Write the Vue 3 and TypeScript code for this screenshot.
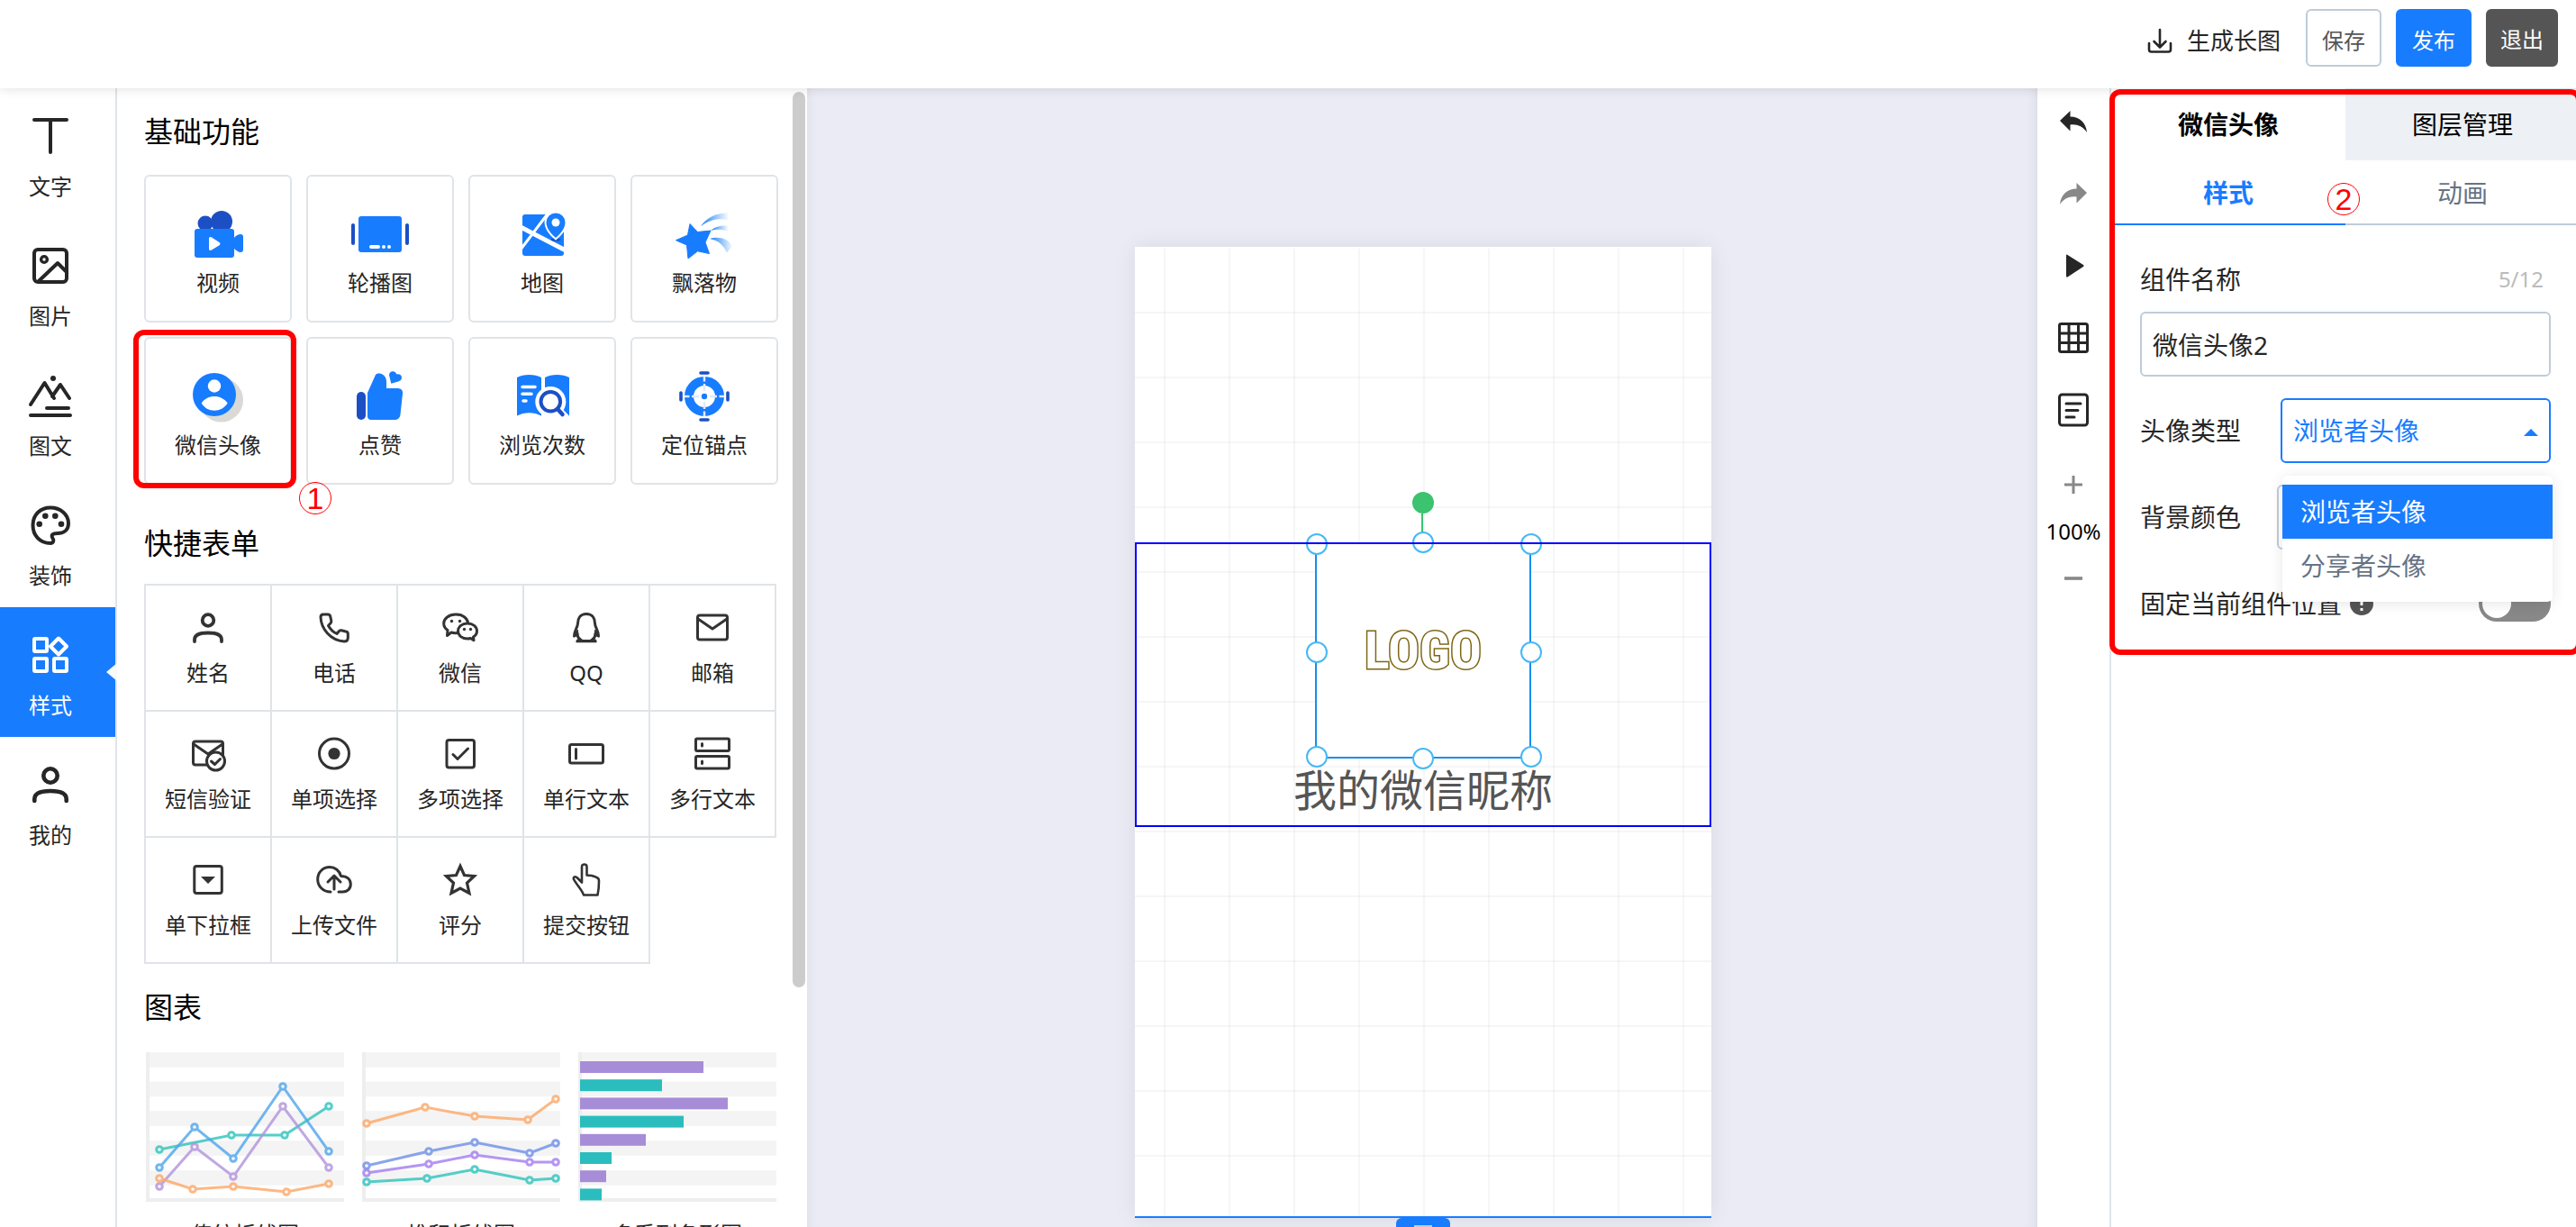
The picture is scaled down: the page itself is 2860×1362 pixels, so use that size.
<script setup lang="ts">
import { ref } from 'vue'

interface Item {
  label: string
  icon: string
}

interface Series {
  color: string
  points: [number, number][]
}

interface Bar {
  color: string
  width: number
}

interface Chart {
  label: string
  series: Series[]
  bars: Bar[]
}

const BLUE = '#187cff'
const NAVY = '#1d4fc4'

const railItems: Item[] = [
  { label: '文字', icon: '<path d="M6 6H42M24 6V42"/>' },
  {
    label: '图片',
    icon: '<rect x="6" y="6" width="36" height="36" rx="4"/><circle cx="17" cy="17" r="3.4" stroke-width="3.4"/><path d="M11 41L32 21L42 31"/>',
  },
  {
    label: '图文',
    icon: '<path d="M2 34L17.500 10L28 27M26 25L35 12L45 27M20 38H44M2 46H46"/><circle cx="27" cy="5" r="3" fill="currentColor" stroke="none"/>',
  },
  {
    label: '装饰',
    icon: '<path d="M24 44C12 44 4.500 35 4.500 24C4.500 12 13 4.500 24 4.500C35 4.500 44 12 44 22C44 30 38 33 32 33C26 33 24.500 35 26.500 38.500C28.500 41 27 44 24 44Z"/><g fill="currentColor" stroke="none"><circle cx="11.700" cy="22.700" r="3.300"/><circle cx="18.300" cy="13.700" r="3.300"/><circle cx="29.300" cy="13.700" r="3.300"/><circle cx="36" cy="22.700" r="3.300"/></g>',
  },
  {
    label: '样式',
    icon: '<rect x="6" y="6" width="14" height="14" rx="1"/><rect x="6" y="28" width="14" height="14" rx="1"/><rect x="28" y="28" width="14" height="14" rx="1"/><path d="M33 5.500L42 14.500L33 23.500L24 14.500Z"/>',
  },
  {
    label: '我的',
    icon: '<circle cx="24" cy="14" r="7.700" stroke-width="4.600"/><path d="M6.300 42V40C6.300 33 14 31 24 31S41.700 33 41.700 40V42" stroke-width="4.600"/>',
  },
]

const basicItems: Item[] = [
  {
    label: '视频',
    icon: `<g fill="${NAVY}"><circle cx="16" cy="18" r="8.500"/><circle cx="34" cy="16" r="12"/></g><rect x="4" y="24" width="44" height="32" rx="3" fill="${BLUE}"/><path d="M48 34C50 31 53 30 55 30C57 30 58 31 58 33V47C58 49 57 50 55 50C53 50 50 48 48 46Z" fill="${BLUE}"/><path d="M20 35C20 33 21.500 32.500 23 33.400L31.500 39C32.800 40 32.800 41.500 31.500 42.300L23 47.600C21.500 48.500 20 48 20 46Z" fill="#fff"/>`,
  },
  {
    label: '轮播图',
    icon: `<g fill="${NAVY}"><rect x="-2" y="18" width="4" height="24" rx="2"/><rect x="58" y="18" width="4" height="24" rx="2"/></g><rect x="6" y="10" width="48" height="40" rx="3" fill="${BLUE}"/><g fill="#fff"><rect x="18" y="42" width="12" height="4" rx="2"/><circle cx="34" cy="44" r="2"/><circle cx="40" cy="44" r="2"/></g>`,
  },
  {
    label: '地图',
    icon: `<rect x="8" y="8" width="46" height="46" rx="3" fill="${BLUE}"/><path d="M6 22L56 48" stroke="#fff" stroke-width="5"/><path d="M37 6L6 47" stroke="#fff" stroke-width="3"/><ellipse cx="45" cy="36" rx="5.500" ry="1.800" fill="${NAVY}"/><path d="M45 34C38 28 34.500 22 34.500 17A10.500 10.500 0 0 1 55.500 17C55.500 22 52 28 45 34Z" fill="${BLUE}" stroke="#fff" stroke-width="4" paint-order="stroke"/><circle cx="45" cy="17" r="4.500" fill="#fff"/>`,
  },
  {
    label: '飘落物',
    icon: `<defs><linearGradient id="tail"><stop offset="0" stop-color="${BLUE}"/><stop offset="1" stop-color="#2a8de8" stop-opacity="0.050"/></linearGradient></defs><path d="M-1.500 36.700L11.500 31L14 18.500L22.500 27.500L37 26L31 39L35.500 51.500L22.500 48.800L12 57L10.500 42Z" fill="${BLUE}" stroke="${BLUE}" stroke-linejoin="round"/><g fill="url(#tail)"><path d="M26 21C33 11 44 6 56 6.500V14C45 12 36 14 26 21Z"/><path d="M37 26C42 21.500 48 20 56 20.500V26.500C49 24.500 44 24 37 26Z"/><path d="M36 35C46 32 57 35 61 43.500L55 50.500C51 42 46 37 36 35Z"/></g>`,
  },
  {
    label: '微信头像',
    icon: `<circle cx="33.500" cy="34" r="24.500" fill="#d9dad6"/><circle cx="26" cy="28" r="24" fill="${BLUE}"/><circle cx="26" cy="18.500" r="7.200" fill="#fff"/><path d="M11.700 37.500C15 32.500 20 30 26 30S37 32.500 40.700 37.500C37 43 32 45.700 26 45.700S15 43 11.700 37.500Z" fill="#fff"/>`,
  },
  {
    label: '点赞',
    icon: `<rect x="4" y="25" width="10" height="31" rx="5" fill="${NAVY}"/><path d="M16 26L25 6C26.500 3 36.500 4 37 13V21H49C53 21 55.500 23 55 27L52.500 50C52 54 49.500 56 46 56H20C17.500 56 16 54.500 16 52Z" fill="${BLUE}"/><path d="M42.300 15.700L40.200 7C39.500 3.500 43 1.500 45.500 2.500C47 3 48 4.200 48.300 5.500C51 4.500 54 6.500 54 9C54 11.500 52.500 12.800 50 13.500Z" fill="${BLUE}"/>`,
  },
  {
    label: '浏览次数',
    icon: `<path d="M2 9C9 5 22 5 29 9V51.500C21 47 10 47 2 51.500ZM33 9C40 5 53 5 60 9V51.500C52 47 41 47 33 51.500Z" fill="${BLUE}"/><path d="M8 19.500H22M8 27.300H18M9 35H12" stroke="#fff" stroke-width="3.500" stroke-linecap="round"/><circle cx="39.300" cy="36" r="17" fill="#fff"/><path d="M46 44L56 54" stroke="#fff" stroke-width="9"/><circle cx="39.300" cy="35.700" r="10.800" fill="none" stroke="${NAVY}" stroke-width="4"/><path d="M47.500 44.500L52.500 50" stroke="${NAVY}" stroke-width="4.500" stroke-linecap="round"/>`,
  },
  {
    label: '定位锚点',
    icon: `<circle cx="30" cy="30" r="17" fill="none" stroke="${BLUE}" stroke-width="10"/><path d="M30 8V13.500M30 16V24M30 36V44M30 46.500V52M8 30H13.500M16 30H24M36 30H44M46.500 30H52" stroke="#dfeafa" stroke-width="2.500"/><circle cx="30" cy="30" r="3.200" fill="${BLUE}"/><path d="M26 4H34M26 56H34M4 26V34M56 26V34" stroke="${NAVY}" stroke-width="3.600" stroke-linecap="round"/>`,
  },
]

const formItems: Item[] = [
  {
    label: '姓名',
    icon: '<circle cx="20" cy="11.500" r="6.300" stroke-width="3.800"/><path d="M5 35V33C5 27.500 12 25.500 20 25.500S35 27.500 35 33V35" stroke-width="3.800"/>',
  },
  {
    label: '电话',
    icon: '<path d="M5 8C5 6 6 5 8 5H13C14.500 5 15.500 6 15.800 7.500L16.800 12C17 13 16.700 14 16 14.800L13.500 17.500C16 22 18.500 24.500 23 26.500L25.500 23.500C26 23 27 22.600 28 22.800L33 24C34.500 24.300 35.300 25.300 35.300 26.500V31C35.300 34 33.500 35 31 35C16 34 5.500 21 5 8Z"/>',
  },
  {
    label: '微信',
    icon: '<path d="M17 25.500C14 26 12 25.700 10 25L5.500 28.500L6 22.500C3 20.500 1.700 18 1.700 15C1.700 9.500 7.500 5 15 5C22 5 27.500 8.500 28.500 14"/><path d="M28 15C22 15 17.500 18.500 17.500 23.500S22 32 28 32C29.500 32 30.500 31.800 31.500 31.500L35 33.700L34.500 30C37 28.500 38.500 26 38.500 23.500C38.500 18.500 34 15 28 15Z"/><g fill="currentColor" stroke="none"><circle cx="10.500" cy="12.500" r="1.700"/><circle cx="19.500" cy="12.500" r="1.700"/><circle cx="24.500" cy="21.500" r="1.700"/><circle cx="31.500" cy="21.500" r="1.700"/></g>',
  },
  {
    label: 'QQ',
    icon: '<path d="M20 4.500C13.500 4.500 10.500 9 10.500 15C10.500 19 6.500 23 6.500 29L10 26C10 29 11 31 12.500 32.500L10 34.500H30L27.500 32.500C29 31 30 29 30 26L33.500 29C33.500 23 29.500 19 29.500 15C29.500 9 26.500 4.500 20 4.500Z"/><path d="M6 29.500L10.500 22V28ZM34 29.500L29.500 22V28ZM9 35.500L13 31L17 34.500H23L27 31L31 35.500Z" fill="currentColor" stroke-width="1"/>',
  },
  {
    label: '邮箱',
    icon: '<rect x="3.500" y="6" width="33" height="27" rx="2.500"/><path d="M4 10L20 21L36 10"/>',
  },
  {
    label: '短信验证',
    icon: '<rect x="3.500" y="6" width="33" height="26" rx="2.500"/><path d="M4 9L20 20L36 9"/><circle cx="28.500" cy="28" r="10" fill="#fff"/><path d="M23.500 28L27.500 31.500L33.500 25.500"/>',
  },
  { label: '单项选择', icon: '<circle cx="20" cy="19.500" r="16.500"/><circle cx="20" cy="19.500" r="6.600" fill="currentColor" stroke="none"/>' },
  { label: '多项选择', icon: '<rect x="5" y="4.500" width="30.500" height="30.500" rx="2.500"/><path d="M12 20.500L17 25.500L28.500 14"/>' },
  { label: '单行文本', icon: '<rect x="1.500" y="9.500" width="37" height="20.500" rx="2"/><path d="M8.500 14.500V25"/>' },
  {
    label: '多行文本',
    icon: '<rect x="1.500" y="3" width="37" height="13.500" rx="1.500"/><rect x="1.500" y="22.500" width="37" height="13.500" rx="1.500"/><path d="M8.500 8.500V11M8.500 28V30.500"/>',
  },
  { label: '单下拉框', icon: '<rect x="4.800" y="4.500" width="30.500" height="30" rx="2.500"/><path d="M12 16H28L20 24Z" fill="currentColor" stroke="none"/>' },
  {
    label: '上传文件',
    icon: '<path d="M16 33C8 33 1.700 27 1.700 19C1.700 11 8 5.500 15 5.500C21 5.500 26 9.500 27.500 15.500C34 15.500 38.300 19 38.300 24.500C38.300 30 34 33 29.500 33H25M20 30V15.500M13 22L20 15L27 22"/>',
  },
  { label: '评分', icon: '<path d="M20 4.500L24.500 14.500L35.500 15.500L27.500 23L30 34.500L20 29L10 34.500L12.500 23L4.500 15.500L15.500 14.500Z" stroke-width="3.200" stroke-linejoin="miter"/>' },
  {
    label: '提交按钮',
    icon: '<path d="M15 22.500V5C15 1.600 20.500 1.600 20.500 5V14.500L26 15C33 17 34 18 34 21C34 28 33.500 32 32.500 36.500H17C15.500 31 9 25 6 19C5 16 8 15.500 10 17.500Z" stroke-width="2.600"/>',
  },
]

const charts: Chart[] = [
  {
    label: '传统折线图',
    series: [
      { color: '#2bc4bb', points: [[15, 108], [95, 92], [154, 92], [203, 60]] },
      { color: '#b193dc', points: [[15, 149], [54, 105], [97, 138], [152, 60], [203, 128]] },
      { color: '#4fa5ec', points: [[15, 128], [54, 83], [97, 118], [152, 38], [203, 110]] },
      { color: '#fda766', points: [[15, 140], [52, 152], [97, 149], [156, 155], [203, 146]] },
    ],
    bars: [],
  },
  {
    label: '堆积折线图',
    series: [
      { color: '#fda766', points: [[5, 79], [70, 61], [125, 71], [184, 75], [215, 52]] },
      { color: '#6d8fe8', points: [[5, 126], [74, 110], [125, 100], [186, 112], [215, 101]] },
      { color: '#a27df0', points: [[5, 134], [74, 124], [125, 114], [186, 122], [215, 122]] },
      { color: '#2bc4bb', points: [[5, 144], [72, 140], [125, 130], [186, 142], [215, 140]] },
    ],
    bars: [],
  },
  {
    label: '多系列条形图',
    series: [],
    bars: [
      { color: '#a78dd8', width: 137 },
      { color: '#2bbdbd', width: 91 },
      { color: '#a78dd8', width: 164 },
      { color: '#2bbdbd', width: 115 },
      { color: '#a78dd8', width: 73 },
      { color: '#2bbdbd', width: 35 },
      { color: '#a78dd8', width: 29 },
      { color: '#2bbdbd', width: 24 },
    ],
  },
]

const avatarTypes = ['浏览者头像', '分享者头像']
const handles = ['nw', 'n', 'ne', 'w', 'e', 'sw', 's', 'se']

const activeRail = ref('样式')
const componentName = ref('微信头像2')
const avatarType = ref('浏览者头像')
const pinned = ref(false)

const toPolyline = (points: [number, number][]): string => points.map((p) => p.join(',')).join(' ')
</script>

<template>
  <div class="editor">
    <header class="topbar">
      <button class="export" type="button">
        <svg width="28" height="28" viewBox="0 0 28 28" fill="none" stroke="currentColor" stroke-width="2.6" stroke-linecap="round" stroke-linejoin="round">
          <path d="M14 2V21M7.500 15L14 21.500L20.500 15M2 17V24Q2 26.500 4.500 26.500H23.500Q26 26.500 26 24V17" />
        </svg>
        生成长图
      </button>
      <button class="btn" type="button">保存</button>
      <button class="btn primary" type="button">发布</button>
      <button class="btn dark" type="button">退出</button>
    </header>

    <div class="workspace">
      <nav class="rail">
        <button
          v-for="item in railItems"
          :key="item.label"
          type="button"
          class="rail-item"
          :class="{ active: item.label === activeRail }"
          @click="activeRail = item.label"
        >
          <svg width="48" height="48" viewBox="0 0 48 48" fill="none" stroke="currentColor" stroke-width="4" stroke-linecap="round" stroke-linejoin="round" v-html="item.icon"></svg>
          <span>{{ item.label }}</span>
        </button>
      </nav>

      <aside class="library">
        <h2>基础功能</h2>
        <div class="cards">
          <button v-for="item in basicItems" :key="item.label" type="button" class="card">
            <svg width="60" height="60" viewBox="0 0 60 60" fill="none" v-html="item.icon"></svg>
            <span>{{ item.label }}</span>
            <i v-if="item.label === '微信头像'" class="mark card-mark"></i>
            <b v-if="item.label === '微信头像'" class="step card-step">1</b>
          </button>
        </div>

        <h2 class="form-title">快捷表单</h2>
        <div class="fields">
          <button v-for="item in formItems" :key="item.label" type="button" class="field">
            <svg width="40" height="40" viewBox="0 0 40 40" fill="none" stroke="currentColor" stroke-width="3" stroke-linecap="round" stroke-linejoin="round" v-html="item.icon"></svg>
            <span>{{ item.label }}</span>
          </button>
        </div>

        <h2 class="chart-title">图表</h2>
        <div class="charts">
          <figure v-for="chart in charts" :key="chart.label">
            <svg width="220" height="166" viewBox="0 0 220 166" fill="none">
              <path d="M4 8.500H220M4 41H220M4 73.500H220M4 106.500H220M4 139.500H220" stroke="#f4f4f4" stroke-width="16.500" />
              <path d="M2 0V164H220" stroke="#eee" stroke-width="4" />
              <rect v-for="(bar, i) in chart.bars" :key="i" x="2" :y="10 + i * 20.2" :width="bar.width" height="13" :fill="bar.color" />
              <g v-for="line in chart.series" :key="line.color" :stroke="line.color" stroke-width="3" opacity="0.8">
                <polyline :points="toPolyline(line.points)" />
                <circle v-for="(p, i) in line.points" :key="i" :cx="p[0]" :cy="p[1]" r="3.3" fill="#fff" />
              </g>
            </svg>
            <figcaption>{{ chart.label }}</figcaption>
          </figure>
        </div>
        <i class="scroll-thumb"></i>
      </aside>

      <main class="stage">
        <section class="page">
          <div class="frame">
            <div class="avatar">
              <span class="logo">LOGO</span>
              <i class="rotate"></i>
              <i v-for="h in handles" :key="h" class="handle" :class="h"></i>
            </div>
            <p class="nickname">我的微信昵称</p>
          </div>
          <button class="page-grip" type="button" aria-label="调整页面高度"><i></i></button>
        </section>
      </main>

      <div class="tools">
        <button type="button" aria-label="撤销">
          <svg width="34" height="34" viewBox="0 0 34 34" fill="currentColor"><path d="M2 16L13.500 5V11.500C24 11.500 31 18 32 29C27 22 21 19.500 13.500 20.500V27.500Z" /></svg>
        </button>
        <button type="button" class="muted" aria-label="重做">
          <svg width="34" height="34" viewBox="0 0 34 34" fill="currentColor"><path d="M32 16L20.500 5V11.500C10 11.500 3 18 2 29C7 22 13 19.500 20.500 20.500V27.500Z" /></svg>
        </button>
        <button type="button" aria-label="预览">
          <svg width="34" height="34" viewBox="0 0 34 34" fill="currentColor"><path d="M9 5.500Q9 4 10.500 5L28 16Q29.500 17 28 18L10.500 29.500Q9 30 9 28.500Z" /></svg>
        </button>
        <button type="button" aria-label="网格">
          <svg width="34" height="34" viewBox="0 0 34 34" fill="none" stroke="currentColor" stroke-width="3"><rect x="1.500" y="1.500" width="31" height="31" rx="2" /><path d="M12 2V32M22.500 2V32M2 12H32M2 22.500H32" /></svg>
        </button>
        <button type="button" aria-label="页面说明">
          <svg width="34" height="38" viewBox="0 0 34 38" fill="none" stroke="currentColor" stroke-width="3" stroke-linecap="round"><rect x="1.500" y="2" width="31" height="34" rx="3" /><path d="M9 12H25M9 19.500H22M9 27H18" /></svg>
        </button>
        <div class="zoom">
          <button type="button" aria-label="放大"><svg width="20" height="20" viewBox="0 0 20 20"><path d="M0 10H20M10 0V20" stroke="currentColor" stroke-width="3" /></svg></button>
          <output>100%</output>
          <button type="button" aria-label="缩小"><svg width="20" height="20" viewBox="0 0 20 20"><path d="M0 10H20" stroke="currentColor" stroke-width="3.6" /></svg></button>
        </div>
      </div>

      <aside class="inspector">
        <div class="tabs main-tabs">
          <button type="button" class="on">微信头像</button>
          <button type="button">图层管理</button>
        </div>
        <div class="tabs sub-tabs">
          <button type="button" class="on">样式</button>
          <button type="button">动画</button>
        </div>
        <form class="props" @submit.prevent>
          <div class="name-head">
            <label for="name">组件名称</label>
            <span class="count">{{ componentName.length }}/12</span>
          </div>
          <input id="name" v-model="componentName" class="text-input" type="text" maxlength="12" />
          <div class="row">
            <label for="type">头像类型</label>
            <div class="select-wrap">
              <select id="type" v-model="avatarType">
                <option v-for="t in avatarTypes" :key="t">{{ t }}</option>
              </select>
              <i class="caret"></i>
              <ul class="menu">
                <li v-for="t in avatarTypes" :key="t" :class="{ selected: t === avatarType }" @click="avatarType = t">{{ t }}</li>
              </ul>
            </div>
          </div>
          <div class="row">
            <label for="color">背景颜色</label>
            <button id="color" class="color" type="button" aria-label="背景颜色"></button>
          </div>
          <div class="row">
            <label for="pin">固定当前组件位置</label>
            <svg class="hint" width="26" height="26" viewBox="0 0 26 26"><circle cx="13" cy="13" r="13" fill="#555" /><path d="M13 6V15M13 18V21" stroke="#fff" stroke-width="3" /></svg>
            <input id="pin" v-model="pinned" class="switch" type="checkbox" />
          </div>
        </form>
        <i class="mark panel-mark"></i>
        <b class="step panel-step">2</b>
      </aside>
    </div>
  </div>
</template>

<style>
body {
  margin: 0;
}
</style>

<style scoped>
* {
  box-sizing: border-box;
}

.editor {
  display: flex;
  flex-direction: column;
  height: 100vh;
  overflow: hidden;
  background: #fff;
  color: #262626;
  font-family: 'Noto Sans', 'Noto Sans CJK SC', sans-serif;
  font-size: 24px;
  font-weight: 400;
  line-height: 32px;
}

button,
input,
select {
  margin: 0;
  padding: 0;
  border: 0;
  background: none;
  color: inherit;
  font: inherit;
}

svg {
  display: block;
  flex: none;
  overflow: visible;
}

.topbar {
  position: relative;
  z-index: 2;
  display: flex;
  justify-content: flex-end;
  gap: 16px;
  height: 98px;
  flex: none;
  padding: 10px 20px;
  background: #fff;
  box-shadow: 0 0 12px rgba(0, 0, 0, 0.14);
}

.export {
  display: flex;
  align-items: center;
  gap: 16px;
  height: 70px;
  margin-right: 12px;
  font-size: 26px;
}

.btn {
  width: 84px;
  height: 64px;
  padding-top: 6px;
  border: 2px solid #bfccd9;
  border-radius: 6px;
  color: #555;
}

.btn.primary {
  border-color: #187cff;
  background: #187cff;
  color: #fff;
}

.btn.dark {
  width: 80px;
  padding-top: 4px;
  border-color: #555;
  background: #555;
  color: #fff;
}

.workspace {
  display: flex;
  flex: 1;
  min-height: 0;
}

.rail {
  width: 130px;
  flex: none;
  border-right: 2px solid #dfe4e8;
}

.rail-item {
  position: relative;
  display: flex;
  flex-direction: column;
  align-items: center;
  gap: 16px;
  width: 100%;
  height: 144px;
  padding: 29px 16px 0 0;
}

.rail-item.active {
  background: #187cff;
  color: #fff;
}

.rail-item.active::after {
  content: '';
  position: absolute;
  top: 62px;
  right: -2px;
  border: 10px solid transparent;
  border-right: 12px solid #fafafa;
  border-left: 0;
}

.library {
  position: relative;
  width: 766px;
  flex: none;
  overflow: hidden;
  padding: 28px 30px 0;
}

h2 {
  margin: 0;
  color: #000;
  font-size: 32px;
  font-weight: 400;
  line-height: 40px;
}

.cards {
  display: grid;
  grid-template-columns: repeat(4, 164px);
  gap: 16px;
  margin-top: 28px;
}

.card {
  position: relative;
  display: flex;
  flex-direction: column;
  align-items: center;
  gap: 8px;
  height: 164px;
  padding-top: 34px;
  border: 2px solid #dfe4e8;
  border-radius: 6px;
}

.mark {
  position: absolute;
  border: 6px solid #f00;
  border-radius: 12px;
  pointer-events: none;
}

.card-mark {
  inset: -10px -7px -6px -14px;
}

.step {
  position: absolute;
  z-index: 1;
  width: 36px;
  height: 36px;
  border: 1px solid #f00;
  border-radius: 50%;
  color: #f00;
  font: 34px/34px 'Liberation Sans', sans-serif;
  text-align: center;
}

.card-step {
  top: 159px;
  left: 170px;
}

.form-title {
  margin-top: 45px;
}

.fields {
  display: flex;
  flex-wrap: wrap;
  width: 702px;
  margin-top: 25px;
}

.field {
  display: flex;
  flex-direction: column;
  align-items: center;
  gap: 14px;
  width: 142px;
  height: 142px;
  margin: 0 -2px -2px 0;
  padding-top: 27px;
  border: 2px solid #dfe4e8;
}

.field svg {
  color: #333;
}

.chart-title {
  margin-top: 30px;
}

.charts {
  display: flex;
  gap: 20px;
  margin: 30px 0 0 2px;
}

figure {
  width: 220px;
  flex: none;
  margin: 0;
}

figcaption {
  margin-top: 20px;
  text-align: center;
  white-space: nowrap;
}

.scroll-thumb {
  position: absolute;
  top: 4px;
  right: 2px;
  width: 14px;
  height: 78.6%;
  border-radius: 7px;
  background: #ccc;
}

.stage {
  display: flex;
  justify-content: center;
  flex: 1;
  min-width: 0;
  padding: 176px 0 0 4px;
  background: #ebebf5;
  box-shadow: inset 10px 0 12px -8px rgba(0, 0, 0, 0.05), inset -10px 0 12px -8px rgba(0, 0, 0, 0.05);
}

.page {
  position: relative;
  width: 640px;
  height: 1078px;
  flex: none;
  padding-top: 326px;
  border-top: 2px solid #fff;
  border-bottom: 2px solid #187cff;
  background:
    linear-gradient(90deg, rgba(0, 0, 0, 0.035) 2px, transparent 2px) 32px 0 / 72px 72px,
    linear-gradient(rgba(0, 0, 0, 0.035) 2px, transparent 2px) 0 -2px / 72px 72px,
    #fff;
  background-origin: padding-box;
  box-shadow: 0 0 24px rgba(0, 0, 0, 0.08);
}

.frame {
  position: relative;
  height: 316px;
}

.frame::after {
  content: '';
  position: absolute;
  inset: 0;
  border: 2px solid #00f;
  pointer-events: none;
}

.avatar {
  position: relative;
  display: flex;
  align-items: center;
  justify-content: center;
  width: 240px;
  height: 240px;
  margin: 0 auto;
  border: 2px solid #188eee;
  background: #fff;
}

.logo {
  color: #fff;
  font-family: 'Roboto Condensed', Roboto, sans-serif;
  font-size: 58px;
  font-weight: 700;
  line-height: 64px;
  paint-order: stroke fill;
  -webkit-text-stroke: 3px #7c6512;
}

.handle {
  position: absolute;
  width: 24px;
  height: 24px;
  border: 2px solid #47b8f5;
  border-radius: 50%;
  background: #fff;
}

.nw,
.w,
.sw {
  left: -12px;
}

.ne,
.e,
.se {
  right: -14px;
}

.n,
.s {
  left: 106px;
}

.nw,
.ne {
  top: -12px;
}

.n {
  top: -14px;
}

.w,
.e {
  top: 108px;
}

.sw,
.se {
  bottom: -12px;
}

.s {
  bottom: -14px;
}

.rotate {
  position: absolute;
  top: -58px;
  left: 106px;
  width: 24px;
  height: 24px;
  border-radius: 50%;
  background: #3bc36f;
}

.rotate::after {
  content: '';
  position: absolute;
  top: 24px;
  left: 10px;
  width: 2px;
  height: 22px;
  background: #3bc36f;
}

.nickname {
  margin: 3px 0 0;
  color: #555;
  font-size: 48px;
  line-height: 64px;
  text-align: center;
}

.page-grip {
  position: absolute;
  top: 100%;
  left: 290px;
  width: 60px;
  height: 28px;
  margin-top: 2px;
  border-radius: 6px;
  background: #187cff;
}

.page-grip i {
  position: absolute;
  top: 8px;
  left: 20px;
  width: 20px;
  height: 2px;
  background: #bfccd9;
}

.tools {
  display: flex;
  flex-direction: column;
  align-items: center;
  width: 82px;
  flex: none;
  border-left: 2px solid #dde0e8;
  background: #fff;
}

.tools > button {
  display: grid;
  place-items: center;
  width: 80px;
  height: 80px;
}

.tools > button:first-child {
  margin-top: -3px;
}

.muted {
  color: #888;
}

.zoom {
  display: flex;
  flex-direction: column;
  align-items: center;
  gap: 26px;
  margin-top: 33px;
  color: #888;
}

.zoom output {
  color: #000;
}

.inspector {
  position: relative;
  width: 518px;
  flex: none;
  border-left: 2px solid #dfe4e8;
  font-size: 28px;
  line-height: 40px;
}

.tabs {
  display: grid;
  grid-template-columns: repeat(2, 260px);
}

.main-tabs button {
  height: 80px;
  background: #edf1f5;
  color: #000;
}

.main-tabs .on {
  background: #fff;
  font-weight: 700;
}

.sub-tabs button {
  height: 72px;
  padding-top: 2px;
  border-bottom: 2px solid #bfccd9;
  color: #667385;
}

.sub-tabs .on {
  border-color: #187cff;
  color: #187cff;
  font-weight: 700;
}

.props {
  display: flex;
  flex-direction: column;
  gap: 24px;
  padding: 40px 28px 0 32px;
}

.name-head {
  display: flex;
  align-items: center;
  justify-content: space-between;
  margin-bottom: -8px;
  padding-right: 8px;
}

.count {
  color: #bbb;
  font-size: 24px;
}

.text-input {
  width: 100%;
  height: 72px;
  padding: 0 12px;
  border: 2px solid #bfccd9;
  border-radius: 6px;
}

.row {
  display: flex;
  align-items: center;
  height: 72px;
}

.select-wrap {
  position: relative;
  width: 300px;
  margin-left: auto;
}

select {
  display: block;
  width: 100%;
  height: 72px;
  padding: 0 12px;
  border: 2px solid #187cff;
  border-radius: 6px;
  color: #187cff;
  appearance: none;
}

.caret {
  position: absolute;
  top: 34px;
  right: 14px;
  border: 8px solid transparent;
  border-top: 0;
  border-bottom-color: #187cff;
}

.menu {
  position: absolute;
  z-index: 1;
  top: 86px;
  left: 2px;
  width: 300px;
  margin: 0;
  padding: 10px 0;
  border-radius: 6px;
  background: #fff;
  box-shadow: 0 2px 16px rgba(0, 0, 0, 0.1);
  color: #667385;
  list-style: none;
}

.menu li {
  padding: 10px 20px;
}

.menu .selected {
  background: #187cff;
  color: #fff;
}

.color {
  width: 304px;
  height: 72px;
  margin-left: auto;
  border: 2px solid #bfccd9;
  border-radius: 6px;
}

.hint {
  margin-left: 9px;
}

.switch {
  position: relative;
  width: 80px;
  height: 40px;
  margin-left: auto;
  border-radius: 20px;
  background: #888;
  appearance: none;
}

.switch::after {
  content: '';
  position: absolute;
  top: 4px;
  left: 4px;
  width: 32px;
  height: 32px;
  border-radius: 50%;
  background: #fff;
}

.panel-mark {
  top: 1px;
  right: -6px;
  left: -2px;
  height: 628px;
  z-index: 2;
}

.panel-step {
  top: 105px;
  left: 240px;
}
</style>
